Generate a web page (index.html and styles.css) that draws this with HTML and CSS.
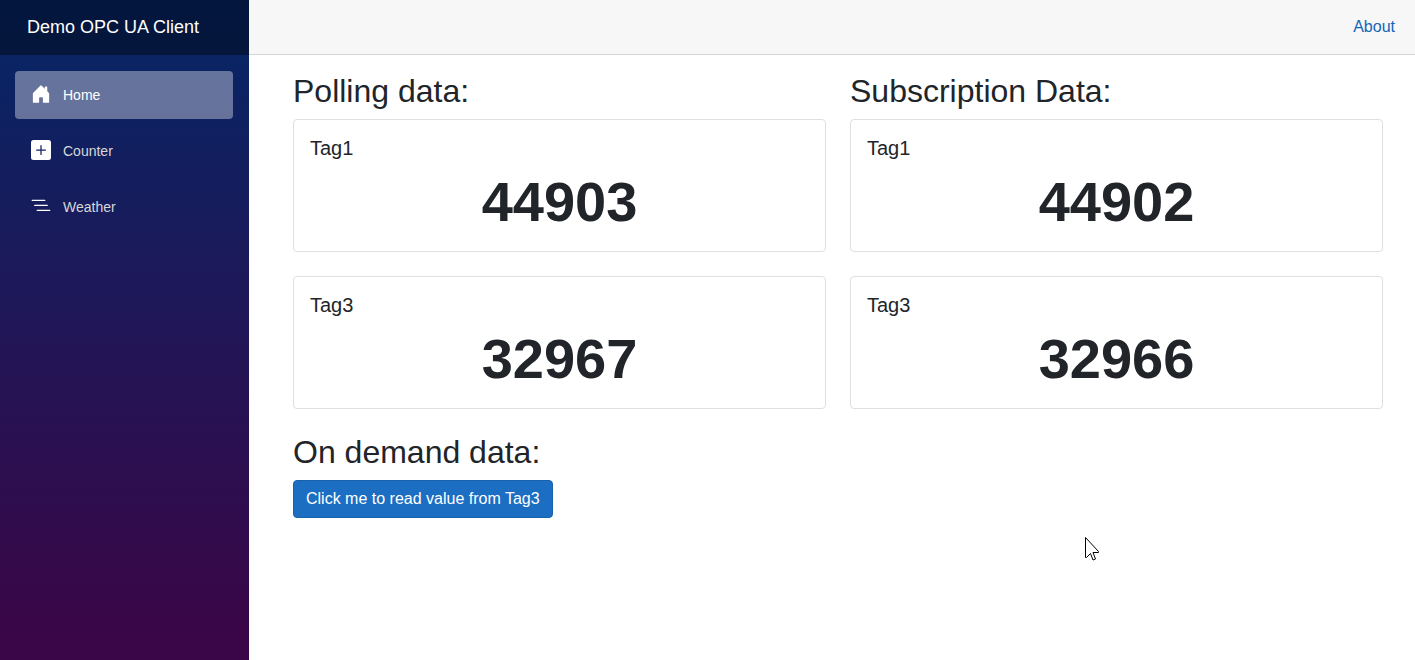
FILE: index.html
```html
<!DOCTYPE html>
<html lang="en">
<head>
<meta charset="utf-8">
<meta name="viewport" content="width=device-width, initial-scale=1">
<title>Demo OPC UA Client</title>
<link rel="stylesheet" href="styles.css">
</head>
<body>
<div class="page">
  <div class="sidebar">
    <div class="top-bar"><a class="brand" href="#">Demo OPC UA Client</a></div>
    <nav class="nav">
      <a class="nav-link active" href="#">
        <svg class="icon" viewBox="0 0 16 16" aria-hidden="true"><path d="M6.5 14.5v-3.505c0-.245.25-.495.5-.495h2c.25 0 .5.25.5.5v3.5a.5.5 0 0 0 .5.5h4a.5.5 0 0 0 .5-.5v-7a.5.5 0 0 0-.146-.354L13 5.793V2.5a.5.5 0 0 0-.5-.5h-1a.5.5 0 0 0-.5.5v1.293L8.354 1.146a.5.5 0 0 0-.708 0l-6 6A.5.5 0 0 0 1.5 7.5v7a.5.5 0 0 0 .5.5h4a.5.5 0 0 0 .5-.5Z"/></svg>
        Home
      </a>
      <a class="nav-link" href="#">
        <svg class="icon" viewBox="0 0 16 16" aria-hidden="true"><path d="M2 0a2 2 0 0 0-2 2v12a2 2 0 0 0 2 2h12a2 2 0 0 0 2-2V2a2 2 0 0 0-2-2H2zm6.5 4.5v3h3a.5.5 0 0 1 0 1h-3v3a.5.5 0 0 1-1 0v-3h-3a.5.5 0 0 1 0-1h3v-3a.5.5 0 0 1 1 0z"/></svg>
        Counter
      </a>
      <a class="nav-link" href="#">
        <svg class="icon" viewBox="0 0 16 16" aria-hidden="true"><path fill-rule="evenodd" d="M4.500 11.500A.5.5 0 0 1 5 11h10a.5.5 0 0 1 0 1H5a.5.5 0 0 1-.5-.5zm-2-4A.5.5 0 0 1 3 7h10a.5.5 0 0 1 0 1H3a.5.5 0 0 1-.5-.5zm-2-4A.5.5 0 0 1 1 3h10a.5.5 0 0 1 0 1H1a.5.5 0 0 1-.5-.5z"/></svg>
        Weather
      </a>
    </nav>
  </div>
  <main class="main">
    <div class="top-row"><a class="about" href="#">About</a></div>
    <article class="content">
      <div class="columns">
        <section class="column">
          <h2 class="heading">Polling data:</h2>
          <div class="card"><h5 class="card-title">Tag1</h5><p class="value">44903</p></div>
          <div class="card"><h5 class="card-title">Tag3</h5><p class="value">32967</p></div>
        </section>
        <section class="column">
          <h2 class="heading">Subscription Data:</h2>
          <div class="card"><h5 class="card-title">Tag1</h5><p class="value">44902</p></div>
          <div class="card"><h5 class="card-title">Tag3</h5><p class="value">32966</p></div>
        </section>
      </div>
      <h2 class="heading">On demand data:</h2>
      <button class="button" type="button">Click me to read value from Tag3</button>
    </article>
  </main>
  <svg class="cursor" viewBox="0 0 16 25" aria-hidden="true"><path d="M1.5 1.500v20h1l4-4 2.500 6.500 2.500-1-2.500-6.500h5.500v-1z"/></svg>
</div>
</body>
</html>
```
FILE: styles.css
```css
* { box-sizing: border-box; }
body {
  margin: 0;
  font: 16px/24px "Liberation Sans", Arial, sans-serif;
  color: #212529;
  background: #fff;
}
a { text-decoration: none; }
.page { display: flex; min-height: 100vh; position: relative; }
.sidebar {
  width: 249px;
  flex: none;
  background: linear-gradient(180deg, #052767 0%, #3a0647 96%);
}
.top-bar {
  height: 55px;
  display: flex;
  align-items: center;
  padding: 0 27px 2px;
  background: rgba(0, 0, 0, 0.4);
}
.brand { color: #fff; font-size: 18px; }
.nav { display: grid; gap: 8px; padding: 16px; padding-left: 15px; }
.nav-link {
  display: flex;
  align-items: center;
  gap: 12px;
  height: 48px;
  padding: 0 16px;
  border-radius: 4px;
  color: #d7d7d7;
  font-size: 14px;
}
.nav-link.active { color: #fff; background: rgba(255, 255, 255, 0.37); }
.icon { width: 20px; height: 20px; margin-bottom: 2px; fill: #fff; }
.main { flex: 1; min-width: 0; }
.top-row {
  height: 55px;
  display: flex;
  align-items: center;
  justify-content: flex-end;
  padding: 0 20px;
  background: #f7f7f7;
  border-bottom: 1px solid #d6d5d5;
}
.about { color: #1464b8; }
.content { padding: 17px 32px 24px 44px; }
.columns { display: grid; grid-template-columns: 1fr 1fr; gap: 24px; }
.heading { margin: 0 0 8px; font-size: 32px; line-height: 39px; font-weight: 400; }
.card {
  margin-bottom: 24px;
  padding: 16px;
  border: 1px solid #dfdfdf;
  border-radius: 4px;
}
.card-title { margin: 0 0 8px; font-size: 20px; line-height: 24px; font-weight: 400; }
.value { margin: 0; text-align: center; font-size: 56px; line-height: 67px; font-weight: 700; }
.button {
  height: 38px;
  padding: 0 12px;
  border: 1px solid #1861ac;
  border-radius: 4px;
  background: #1b6ec2;
  color: #fff;
  font: inherit;
}
.cursor { position: absolute; left: 1084px; top: 536px; width: 16px; height: 25px; fill: #fff; stroke: #000; }
```
